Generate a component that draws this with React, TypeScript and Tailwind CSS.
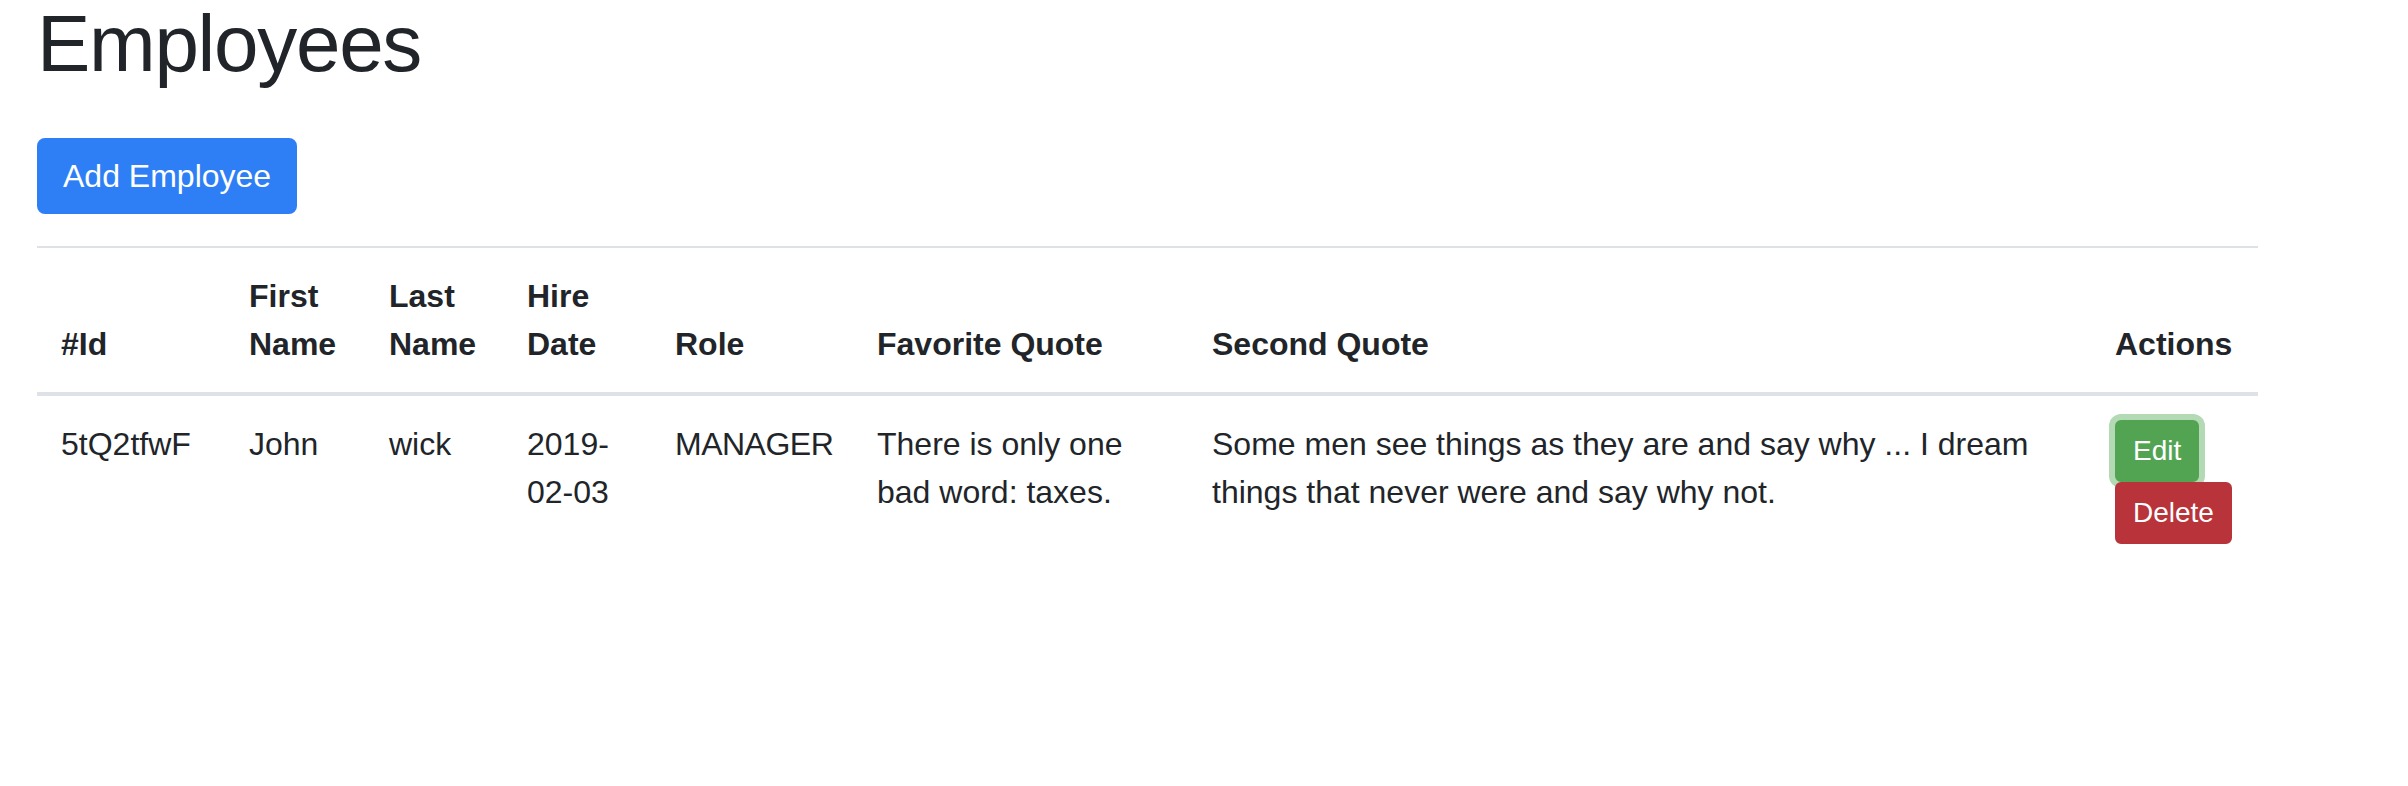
import React from "react";

type Employee = {
  id: string;
  firstName: string;
  lastName: string;
  hireDate: string;
  role: string;
  favoriteQuote: string;
  secondQuote: string;
};

const employees: Employee[] = [
  {
    id: "5tQ2tfwF",
    firstName: "John",
    lastName: "wick",
    hireDate: "2019-02-03",
    role: "MANAGER",
    favoriteQuote: "There is only one bad word: taxes.",
    secondQuote:
      "Some men see things as they are and say why ... I dream things that never were and say why not.",
  },
];

const headers = ["#Id", "First Name", "Last Name", "Hire Date", "Role", "Favorite Quote", "Second Quote", "Actions"];

function App() {
  return (
    <div className="min-h-screen bg-white text-[#212529] font-['Liberation_Sans',Arial,sans-serif]">
      <div className="pl-[37px] w-[2258px]">
        <h1 className="text-[80px] leading-[88px] font-normal tracking-[-1.3px]">Employees</h1>

        <button className="mt-[50px] h-[76px] px-[24px] rounded-[8px] border-2 border-[#2e7ff6] bg-[#2e7ff6] text-white text-[32px] leading-[48px]">
          Add Employee
        </button>

        <table className="mt-[32px] w-[2221px] table-fixed border-collapse text-[32px] leading-[48px]">
          <colgroup>
            <col className="w-[188px]" />
            <col className="w-[140px]" />
            <col className="w-[138px]" />
            <col className="w-[148px]" />
            <col className="w-[202px]" />
            <col className="w-[335px]" />
            <col className="w-[903px]" />
            <col className="w-[167px]" />
          </colgroup>
          <thead>
            <tr>
              {headers.map((h) => (
                <th
                  key={h}
                  className="p-[24px] text-left align-bottom font-bold border-t-2 border-b-4 border-[#dee2e6]"
                >
                  {h}
                </th>
              ))}
            </tr>
          </thead>
          <tbody>
            {employees.map((e) => (
              <tr key={e.id}>
                <td className="p-[24px] align-top">{e.id}</td>
                <td className="p-[24px] align-top">{e.firstName}</td>
                <td className="p-[24px] align-top">{e.lastName}</td>
                <td className="p-[24px] align-top">{e.hireDate}</td>
                <td className="p-[24px] align-top tracking-[-0.5px]">{e.role}</td>
                <td className="p-[24px] align-top">{e.favoriteQuote}</td>
                <td className="p-[24px] align-top">{e.secondQuote}</td>
                <td className="p-[24px] align-top">
                  <div className="flex flex-col items-start">
                    <button className="h-[62px] px-[16px] rounded-[6px] border-2 border-[#52a452] bg-[#52a452] text-white text-[28px] leading-[42px] shadow-[0_0_0_6px_#b4dab5]">
                      Edit
                    </button>
                    <button className="relative h-[62px] px-[16px] rounded-[6px] border-2 border-[#b9333a] bg-[#b9333a] text-white text-[28px] leading-[42px]">
                      Delete
                    </button>
                  </div>
                </td>
              </tr>
            ))}
          </tbody>
        </table>
      </div>
    </div>
  );
}

export default App;
